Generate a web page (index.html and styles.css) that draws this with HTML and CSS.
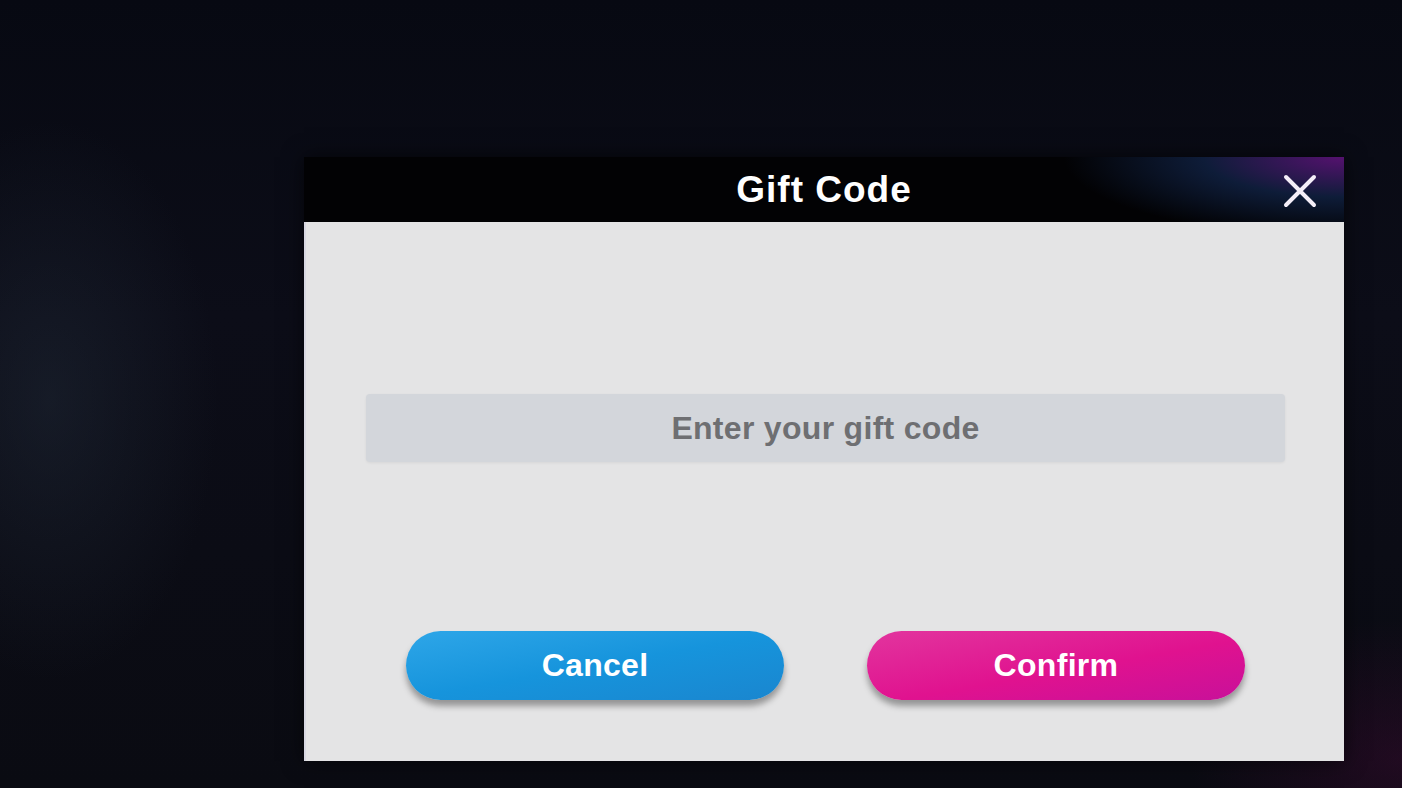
FILE: index.html
```html
<!DOCTYPE html>
<html lang="en">
<head>
    <meta charset="UTF-8">
    <meta name="viewport" content="width=device-width, initial-scale=1.0">
    <title>Gift Code</title>
    <link rel="stylesheet" href="styles.css">
</head>
<body>
    <div class="screen">
        <div class="dialog">
            <div class="dialog-header">
                <h1>Gift Code</h1>
                <button class="close-btn" aria-label="Close">
                    <svg width="34" height="34" viewBox="0 0 34 34">
                        <path d="M3 3 L31 31 M31 3 L3 31" stroke="#f4eef8" stroke-width="4" stroke-linecap="round"/>
                    </svg>
                </button>
            </div>

            <div class="dialog-body">
                <input class="code-input" type="text" placeholder="Enter your gift code">

                <div class="actions">
                    <button class="pill-btn cancel-btn">Cancel</button>
                    <button class="pill-btn confirm-btn">Confirm</button>
                </div>
            </div>
        </div>
    </div>
</body>
</html>
```

FILE: styles.css
```css
html, body {
    margin: 0;
    height: 100%;
}

body {
    background:
        radial-gradient(ellipse 240px 400px at 50px 400px, rgba(34, 44, 58, 0.45), transparent 70%),
        radial-gradient(ellipse 300px 200px at 1400px 760px, rgba(60, 10, 50, 0.45), transparent 70%),
        linear-gradient(180deg, #070912 0%, #0c0d18 40%, #0a0b12 100%);
    font-family: "Liberation Sans", Arial, sans-serif;
    overflow: hidden;
}

.screen {
    padding: 157px 58px 0 304px;
}

.dialog {
    width: 1040px;
    box-shadow: 0 0 20px rgba(0, 0, 0, 0.6);
}

.dialog-header {
    height: 65px;
    display: flex;
    align-items: center;
    justify-content: center;
    position: relative;
    background:
        radial-gradient(ellipse 280px 80px at 1040px 0px, rgba(100, 20, 130, 0.85), rgba(24, 50, 100, 0.55) 50%, transparent 100%),
        #020204;
}

.dialog-header h1 {
    margin: 0;
    color: #ffffff;
    font-size: 37px;
    font-weight: bold;
    letter-spacing: 1px;
}

.close-btn {
    position: absolute;
    right: 27px;
    top: 17px;
    background: none;
    border: none;
    padding: 0;
    cursor: pointer;
    line-height: 0;
}

.dialog-body {
    height: 539px;
    box-sizing: border-box;
    background: #e4e4e5;
    border-left: 2px solid #d8d8e2;
    padding: 172px 59px 61px 60px;
    display: flex;
    flex-direction: column;
    justify-content: space-between;
}

.code-input {
    height: 66px;
    border: none;
    border-radius: 4px;
    background: #d3d6db;
    box-shadow: 0 1px 3px rgba(0, 0, 0, 0.06);
    text-align: center;
    font-family: "Liberation Sans", Arial, sans-serif;
    font-size: 32px;
    font-weight: bold;
    letter-spacing: 0.3px;
    color: #555;
    outline: none;
}

.code-input::placeholder {
    color: #6e6f72;
}

.actions {
    display: flex;
    justify-content: center;
    gap: 83px;
}

.pill-btn {
    width: 378px;
    height: 69px;
    border: none;
    border-radius: 35px;
    color: #ffffff;
    font-family: "Liberation Sans", Arial, sans-serif;
    font-size: 32px;
    font-weight: bold;
    letter-spacing: 0.3px;
    cursor: pointer;
    box-shadow: 0 6px 6px rgba(0, 0, 0, 0.35);
}

.cancel-btn {
    background: linear-gradient(170deg, #2ea6e8 0%, #1694dc 50%, #1a86cf 100%);
}

.confirm-btn {
    background: linear-gradient(170deg, #e2359e 0%, #e0128f 55%, #c8109a 100%);
}
```
